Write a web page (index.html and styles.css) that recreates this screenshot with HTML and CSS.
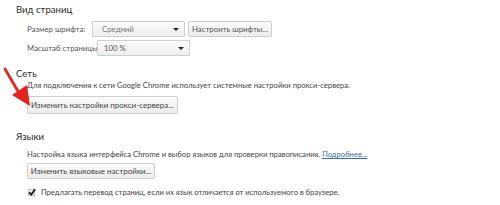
FILE: index.html
```html
<!DOCTYPE html>
<html lang="ru">
<head>
<meta charset="utf-8">
<link rel="stylesheet" href="styles.css">
</head>
<body>
<div class="page">
  <section class="sec sec-view">
    <h3 class="title">Вид страниц</h3>
    <div class="opts">
      <div class="row row-first">
        <span class="label">Размер шрифта:</span>
        <div class="select sel-font"><span>Средний</span><i class="tri"></i></div>
        <button class="btn btn-fonts">Настроить шрифты...</button>
      </div>
      <div class="row">
        <span class="label label-zoom">Масштаб страницы:</span>
        <div class="select sel-zoom"><span>100 %</span><i class="tri"></i></div>
      </div>
    </div>
  </section>

  <section class="sec sec-net">
    <h3 class="title">Сеть</h3>
    <div class="opts">
      <p class="text text-net">Для подключения к сети Google Chrome использует системные настройки прокси-сервера.</p>
      <button class="btn btn-big btn-proxy">Изменить настройки прокси-сервера...</button>
    </div>
  </section>

  <section class="sec sec-lang">
    <h3 class="title">Языки</h3>
    <div class="opts">
      <p class="text text-lang">Настройка языка интерфейса Chrome и выбор языков для проверки правописания. <a class="link" href="#">Подробнее...</a></p>
      <button class="btn btn-big btn-langs">Изменить языковые настройки...</button>
      <label class="check">
        <span class="box"><svg viewBox="0 0 8 8" width="8" height="8"><path d="M1 4.3 L3.2 6.6 L7.2 1.2" fill="none" stroke="#1e1e1e" stroke-width="1.7"/></svg></span>
        <span>Предлагать перевод страниц, если их язык отличается от используемого в браузере.</span>
      </label>
    </div>
  </section>

  <svg class="arrow" viewBox="0 0 36 42" width="36" height="42">
    <line x1="2" y1="2" x2="16" y2="26" stroke="#e3261d" stroke-width="2.8" stroke-linecap="round"/>
    <polygon points="9,28 24,18 27,39" fill="#e3261d"/>
  </svg>
</div>
</body>
</html>
```
FILE: styles.css
```css
html, body {
  margin: 0;
  padding: 0;
  background: #fff;
}
body {
  font-family: Lato, "Open Sans", "Noto Sans", sans-serif;
  color: #333;
}
.page {
  position: relative;
  padding: 3px 0 0 16px;
  width: 484px;
  height: 202px;
  overflow: hidden;
}
.title {
  margin: 0;
  font-size: 9.6px;
  font-weight: normal;
  line-height: 14px;
  color: #2c2c2c;
}
.opts {
  padding-left: 11px;
}
.row {
  display: flex;
  align-items: center;
  height: 18px;
  margin-top: 1px;
}
.row-first { margin-top: 3px; }
.label {
  font-size: 7.8px;
  color: #555;
  width: 65px;
  white-space: nowrap;
}
.label-zoom { width: 70px; }
.select {
  box-sizing: border-box;
  height: 16px;
  border: 1px solid #cfcfcf;
  border-radius: 1px;
  background: linear-gradient(#fbfbfb, #eeeeee);
  display: flex;
  align-items: center;
  justify-content: space-between;
  padding: 0 5px 0 9px;
  font-size: 7.8px;
  color: #777;
}
.sel-font { width: 93px; }
.sel-zoom { width: 93px; padding-left: 6px; color: #555; }
.tri {
  width: 0;
  height: 0;
  border-left: 3px solid transparent;
  border-right: 3px solid transparent;
  border-top: 3.5px solid #222;
}
.btn {
  box-sizing: border-box;
  font-family: inherit;
  height: 16px;
  padding: 0;
  border: 1px solid #cfcfcf;
  border-radius: 2px;
  background: linear-gradient(#fbfbfb, #ececec);
  font-size: 7.8px;
  color: #555;
  line-height: 14px;
  text-align: center;
  white-space: nowrap;
}
.btn-fonts { width: 84px; margin-left: 3px; }
.sec-net { margin-top: 11px; }
.sec-net .title { line-height: 12px; }
.text {
  margin: 0;
  font-size: 7.65px;
  line-height: 10px;
  color: #444;
  white-space: nowrap;
}
.btn-big {
  display: block;
  height: 18px;
  font-size: 8px;
  color: #444;
}
.btn-proxy { width: 151px; margin-top: 6px; }
.sec-lang { margin-top: 17px; }
.sec-lang .title { line-height: 12px; }
.text-lang { margin-top: 5px; line-height: 12px; }
.btn-langs { width: 128px; height: 16px; margin-top: 3px; }
.link {
  color: #3b68b5;
  text-decoration: underline;
}
.check {
  display: flex;
  align-items: center;
  gap: 6px;
  margin-top: 7px;
  height: 12px;
  font-size: 7.6px;
  color: #444;
  white-space: nowrap;
}
.box {
  box-sizing: border-box;
  display: inline-flex;
  width: 7px;
  height: 7px;
  border: 1px solid #c4c4c4;
  background: #eee;
  align-items: center;
  justify-content: center;
  overflow: visible;
  margin-left: 1px;
}
.box svg { flex: none; }
.arrow {
  position: absolute;
  left: 3px;
  top: 67px;
}
```
